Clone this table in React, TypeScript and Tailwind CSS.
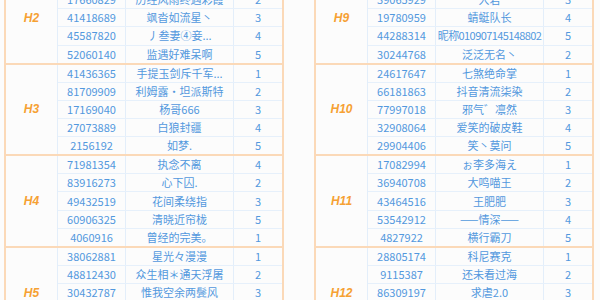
import React from "react";

type Row = [string, string, string];
type Group = { name: string; rows: Row[] };

const leftGroups: Group[] = [
    {
        name: "H2",
        rows: [
            ["35816042", "北城以北", "1"],
            ["17660829", "历经风雨终遇彩霞", "2"],
            ["41418689", "飒沓如流星丶", "3"],
            ["45587820", "丿叁妻④妾...", "4"],
            ["52060140", "监遇好难呆啊", "5"],
        ],
    },
    {
        name: "H3",
        rows: [
            ["41436365", "手提玉剑斥千军...", "1"],
            ["81709909", "利姆露·坦派斯特", "2"],
            ["17169040", "杨哥666", "3"],
            ["27073889", "白狼封疆", "4"],
            ["2156192", "如梦.", "5"],
        ],
    },
    {
        name: "H4",
        rows: [
            ["71981354", "执念不离", "4"],
            ["83916273", "心下囚.", "2"],
            ["49432519", "花间柔绕指", "3"],
            ["60906325", "清晓近帘栊", "5"],
            ["4060916", "曾经的完美。", "1"],
        ],
    },
    {
        name: "H5",
        rows: [
            ["38062881", "星光々漫漫", "1"],
            ["48812430", "众生相＊通天浮屠", "2"],
            ["30432787", "惟我空余两鬓风", "3"],
            ["51209476", "一笑倾城", "4"],
            ["20948813", "南风知我意", "5"],
        ],
    },
];

const rightGroups: Group[] = [
    {
        name: "H9",
        rows: [
            ["62047731", "逍遥散人", "1"],
            ["39065929", "大君", "3"],
            ["19780959", "蜻蜓队长", "4"],
            ["44288314", "昵称010907145148802", "5"],
            ["30244768", "泛泛无名丶", "2"],
        ],
    },
    {
        name: "H10",
        rows: [
            ["24617647", "七煞绝命掌", "1"],
            ["66181863", "抖音清流柒染", "2"],
            ["77997018", "邪气゛凛然", "3"],
            ["32908064", "爱笑的破皮鞋", "4"],
            ["29904406", "笑丶莫问", "5"],
        ],
    },
    {
        name: "H11",
        rows: [
            ["17082994", "ぉ李多海え", "1"],
            ["36940708", "大鸣喵王", "2"],
            ["43464516", "王肥肥", "3"],
            ["53542912", "——情深——", "4"],
            ["4827922", "横行霸刀", "5"],
        ],
    },
    {
        name: "H12",
        rows: [
            ["28805174", "科尼赛克", "1"],
            ["9115387", "还未看过海", "2"],
            ["86309197", "求虐2.0", "3"],
            ["70315528", "浪子回头", "4"],
            ["12876043", "风吹麦浪", "5"],
        ],
    },
];

function GroupTable({ groups }: { groups: Group[] }) {
    return (
        <div className="w-[280px] shrink-0 border-x-2 border-[#fbd9b8] flex flex-col">
            {groups.map((g) => (
                <div key={g.name} className="h-[91.6px] shrink-0 flex border-b-2 border-[#fbd9b8]">
                    {/* 组名 */}
                    <div className="w-[52px] shrink-0 flex items-center justify-center border-r border-[#e3eefa]">
                        <span className="text-[#f6a133] text-[12px] font-bold italic font-['Liberation_Sans',sans-serif]">
                            {g.name}
                        </span>
                    </div>
                    <div className="flex-1 flex flex-col">
                        {g.rows.map((r, i) => (
                            <div
                                key={r[0]}
                                className={
                                    i < g.rows.length - 1
                                        ? "flex-1 grid grid-cols-[68px_108px_1fr] border-b-[1.5px] border-[#e6f0fb]"
                                        : "flex-1 grid grid-cols-[68px_108px_1fr]"
                                }
                            >
                                <div className="flex items-center justify-center border-r border-[#e3eefa]">{r[0]}</div>
                                <div
                                    className={
                                        r[1].length > 12
                                            ? "flex items-center justify-center border-r border-[#e3eefa] whitespace-nowrap overflow-hidden tracking-[-0.6px]"
                                            : "flex items-center justify-center border-r border-[#e3eefa] whitespace-nowrap overflow-hidden"
                                    }
                                >
                                    {r[1]}
                                </div>
                                <div className="flex items-center justify-center">{r[2]}</div>
                            </div>
                        ))}
                    </div>
                </div>
            ))}
        </div>
    );
}

export default function App() {
    return (
        <div className="w-[600px] h-[300px] overflow-hidden bg-[#fcfcfc] text-[#5298de] text-[11px] leading-none font-['Noto_Sans_CJK_SC',sans-serif]">
            <div className="flex gap-[30px] pl-[4px] mt-[-27px]">
                <GroupTable groups={leftGroups} />
                <GroupTable groups={rightGroups} />
            </div>
        </div>
    );
}
